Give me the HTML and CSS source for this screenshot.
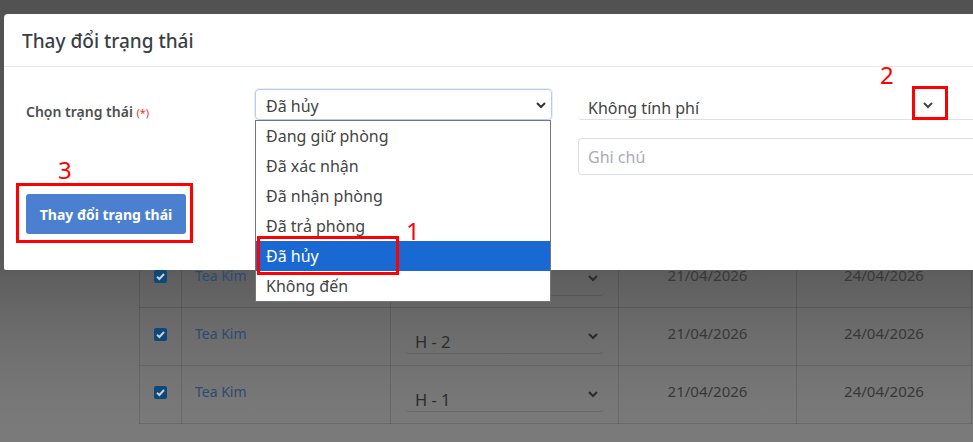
FILE: index.html
```html
<!DOCTYPE html>
<html lang="vi">
<head>
    <meta charset="UTF-8">
    <meta name="viewport" content="width=device-width, initial-scale=1.0">
    <title>Thay đổi trạng thái</title>
    <link rel="stylesheet" href="styles.css">
</head>
<body>
    <div class="page">
        <table class="rooms">
            <tr>
                <td class="col-check"><span class="cb"><svg viewBox="0 0 13 13" width="13" height="13"><polyline points="3,6.8 5.4,9 10,4" fill="none" stroke="#c9cfd6" stroke-width="2"/></svg></span></td>
                <td class="col-guest">Tea Kim</td>
                <td class="col-room"><div class="room-select">H - 3<svg class="chev" viewBox="0 0 10 7" width="10" height="7"><polyline points="1,1 5,5 9,1" fill="none" stroke="#2b2b2b" stroke-width="2"/></svg></div></td>
                <td class="col-date">21/04/2026</td>
                <td class="col-date">24/04/2026</td>
            </tr>
            <tr>
                <td class="col-check"><span class="cb"><svg viewBox="0 0 13 13" width="13" height="13"><polyline points="3,6.8 5.4,9 10,4" fill="none" stroke="#c9cfd6" stroke-width="2"/></svg></span></td>
                <td class="col-guest">Tea Kim</td>
                <td class="col-room"><div class="room-select">H - 2<svg class="chev" viewBox="0 0 10 7" width="10" height="7"><polyline points="1,1 5,5 9,1" fill="none" stroke="#2b2b2b" stroke-width="2"/></svg></div></td>
                <td class="col-date">21/04/2026</td>
                <td class="col-date">24/04/2026</td>
            </tr>
            <tr>
                <td class="col-check"><span class="cb"><svg viewBox="0 0 13 13" width="13" height="13"><polyline points="3,6.8 5.4,9 10,4" fill="none" stroke="#c9cfd6" stroke-width="2"/></svg></span></td>
                <td class="col-guest">Tea Kim</td>
                <td class="col-room"><div class="room-select">H - 1<svg class="chev" viewBox="0 0 10 7" width="10" height="7"><polyline points="1,1 5,5 9,1" fill="none" stroke="#2b2b2b" stroke-width="2"/></svg></div></td>
                <td class="col-date">21/04/2026</td>
                <td class="col-date">24/04/2026</td>
            </tr>
        </table>
    </div>

    <div class="modal">
        <div class="modal-header">
            <h2>Thay đổi trạng thái</h2>
        </div>
        <div class="modal-body">
            <div class="form-row">
                <label class="field-label">Chọn trạng thái <span class="req">(*)</span></label>

                <div class="status-field">
                    <div class="select focused">
                        <span>Đã hủy</span>
                        <svg class="chev" viewBox="0 0 10 7" width="10" height="7"><polyline points="1,1 5,5 9,1" fill="none" stroke="#333" stroke-width="2"/></svg>
                    </div>
                    <ul class="options">
                        <li>Đang giữ phòng</li>
                        <li>Đã xác nhận</li>
                        <li>Đã nhận phòng</li>
                        <li>Đã trả phòng</li>
                        <li class="active">Đã hủy</li>
                        <li>Không đến</li>
                    </ul>
                    <span class="mark mark-1"></span>
                    <span class="step step-1">1</span>
                </div>

                <div class="extra-fields">
                    <div class="select plain">
                        <span>Không tính phí</span>
                        <svg class="chev" viewBox="0 0 10 7" width="10" height="7"><polyline points="1,1 5,5 9,1" fill="none" stroke="#444" stroke-width="2"/></svg>
                        <span class="mark mark-2"></span>
                        <span class="step step-2">2</span>
                    </div>
                    <input class="note" type="text" placeholder="Ghi chú">
                </div>
            </div>

            <div class="actions">
                <span class="step step-3">3</span>
                <button type="button" class="btn-primary">Thay đổi trạng thái</button>
            </div>
        </div>
    </div>
</body>
</html>
```

FILE: styles.css
```css
html, body { margin: 0; height: 100%; }
body {
    font-family: 'Noto Sans', 'Open Sans', sans-serif;
    overflow: hidden;
    background: linear-gradient(180deg, #525252 0%, #585858 58%, #5f5f5f 63%, #6c6c6c 75%, #777777 90%, #7b7b7b 100%);
}

/* page under the backdrop, already dimmed */
.page { padding: 249px 0 0 139px; }
.rooms {
    border-collapse: collapse;
    font-size: 14px;
    color: #353535;
}
.rooms tr { height: 58px; }
.rooms td {
    border: 1px solid rgba(0,0,0,0.13);
    padding: 0;
    vertical-align: top;
}
.col-check { width: 41px; text-align: center; }
.col-guest { width: 195px; padding: 16px 0 0 13px !important; color: #2c4a70; }
.col-room { width: 199px; padding: 13px 14px 0 !important; }
.col-date { width: 177px; text-align: center; padding-top: 15px !important; font-size: 15px; color: #383838; }
.col-date:last-child { width: 174px; }
.cb {
    display: inline-block;
    width: 13px;
    height: 13px;
    margin-top: 20px;
    margin-left: -1px;
    border-radius: 2px;
    background: #0d4878;
}
.cb svg { display: block; }
.room-select {
    position: relative;
    height: 22px;
    padding: 10px 0 0 10px;
    font-size: 16.5px;
    line-height: 22px;
    color: #2c2c2c;
    border-bottom: 1px solid rgba(0,0,0,0.12);
    border-radius: 0 0 4px 4px;
}
.room-select .chev { position: absolute; right: 6px; top: 12px; }

/* modal */
.modal {
    position: fixed;
    top: 14px;
    left: 4px;
    width: 1000px;
    background: #fff;
    border-radius: 4px 0 0 2px;
    color: #333;
}
.modal-header {
    height: 52px;
    border-bottom: 1px solid #e5e8eb;
    padding: 0 18px;
}
.modal-header h2 {
    margin: 0;
    font-size: 19px;
    font-weight: 500;
    line-height: 54px;
    color: #3a3f47;
}
.modal-body { padding: 22px 0 27px 22px; }

.form-row {
    display: grid;
    grid-template-columns: 203px 297px 1fr;
    column-gap: 26px;
}
.field-label {
    padding-top: 13px;
    font-size: 14px;
    font-weight: 600;
    color: #4d4f53;
}
.req { color: #e53935; font-size: 11px; font-weight: 400; }

.status-field { position: relative; }
.select {
    position: relative;
    height: 31px;
    box-sizing: border-box;
    padding: 0 10px;
    font-size: 16px;
    line-height: 31px;
    color: #444;
}
.select .chev { position: absolute; right: 5px; top: 12px; }
.select.focused {
    border: 1px solid #b7cdee;
    border-radius: 4px;
    line-height: 33px;
    box-shadow: 0 0 0 1px #e6eef9;
}
.select.plain {
    border-bottom: 1px solid #dcdfe3;
    border-radius: 0 0 0 4px;
    line-height: 38px;
}
.select.plain .chev { right: auto; left: 345px; top: 13px; }

.options {
    position: absolute;
    top: 31px;
    left: 0;
    width: 296px;
    box-sizing: border-box;
    margin: 0;
    padding: 0;
    list-style: none;
    background: #fff;
    border: 1px solid #767676;
    z-index: 2;
}
.options li {
    height: 30px;
    line-height: 30px;
    padding-left: 10px;
    font-size: 16px;
    color: #444;
}
.options li.active { background: #1a69d2; color: #fff; }

.extra-fields { display: flex; flex-direction: column; gap: 18px; }
.note {
    height: 37px;
    box-sizing: border-box;
    border: 1px solid #dcdfe3;
    border-radius: 4px;
    padding: 0 9px;
    font-family: inherit;
    font-size: 16px;
}
.note::placeholder { color: #a9adb2; }

/* numbered red markers */
.mark { position: absolute; border: 3px solid #ff0000; z-index: 3; }
.mark-1 { left: 2px; top: 147px; width: 136px; height: 33px; }
.mark-2 { left: 334px; top: -3px; width: 30px; height: 28px; }
.step {
    position: absolute;
    z-index: 3;
    font-size: 24px;
    line-height: 1;
    color: #ff0000;
}
.step-1 { left: 151px; top: 130px; }
.step-2 { left: 302px; top: -26px; }
.step-3 { left: 39px; top: -28px; }

.actions {
    position: relative;
    display: inline-block;
    margin: 8px 0 0 -10px;
    padding: 8px 4px 6px 7px;
    border: 3px solid #ff0000;
}
.btn-primary {
    display: block;
    width: 160px;
    height: 40px;
    border: none;
    border-radius: 3px;
    background: #4a80cf;
    color: #fff;
    font-family: inherit;
    font-size: 14px;
    font-weight: 700;
}
```
